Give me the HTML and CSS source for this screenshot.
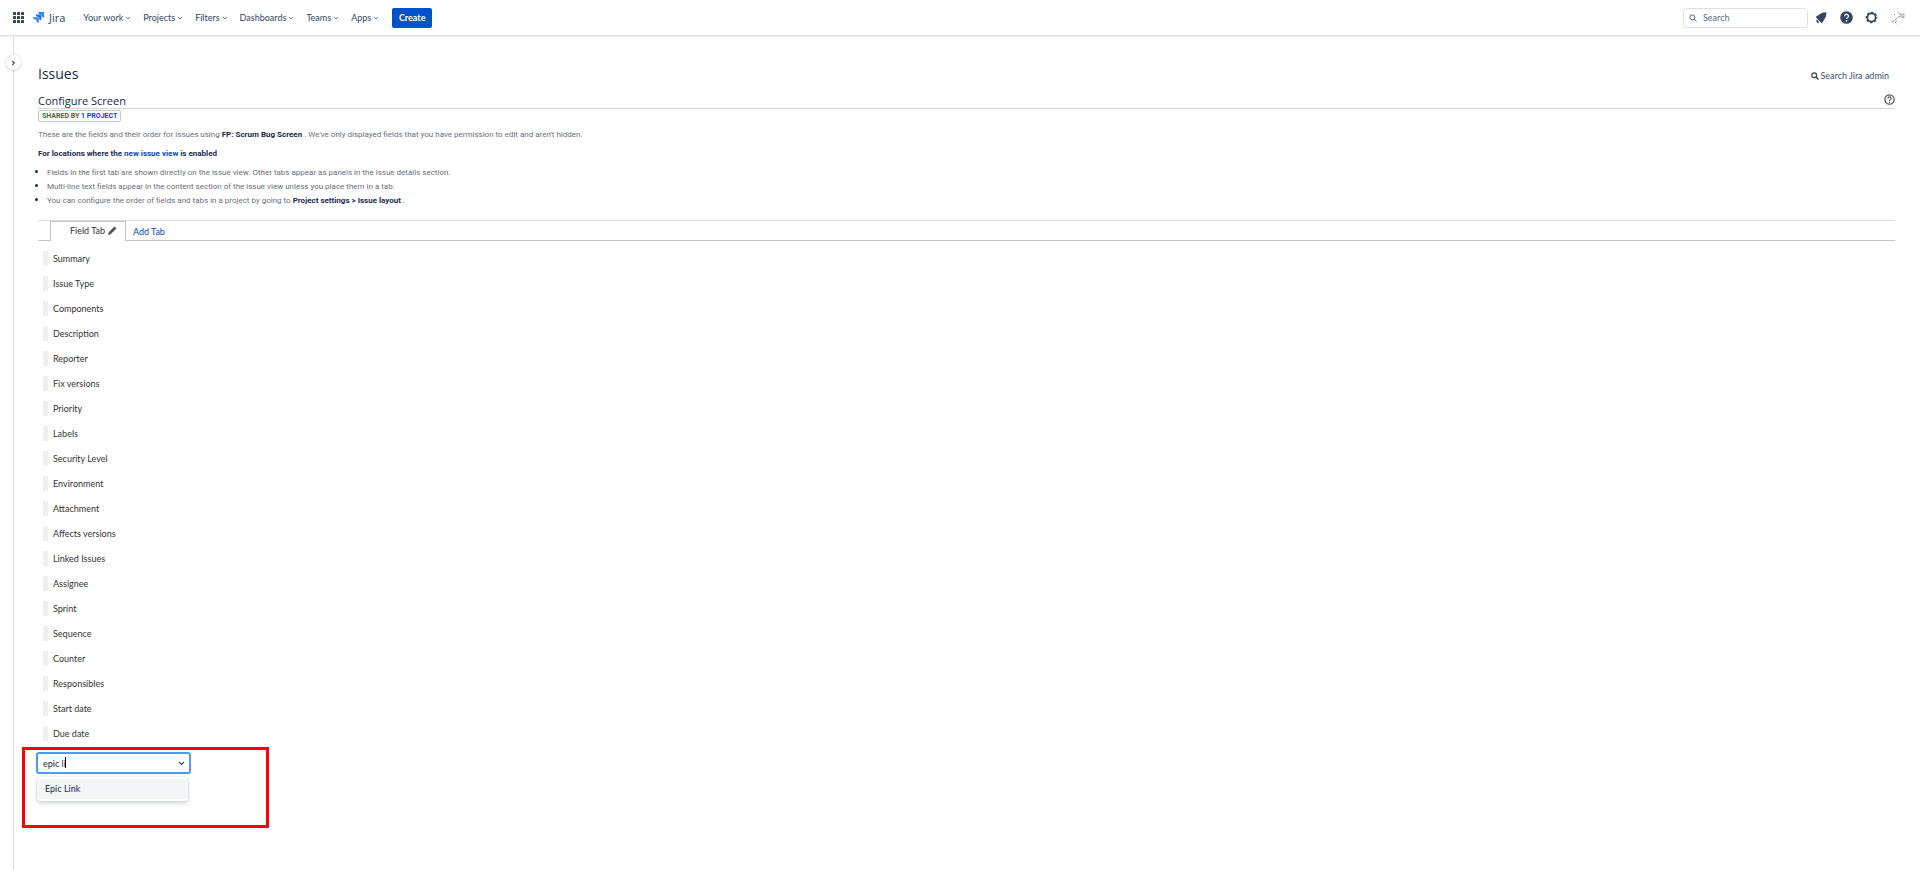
FILE: index.html
```html
<!DOCTYPE html>
<html lang="en">
<head>
    <meta charset="UTF-8">
    <meta name="viewport" content="width=device-width, initial-scale=1.0">
    <title>Configure Screen - Jira</title>
    <link rel="stylesheet" href="styles.css">
</head>
<body>

    <header class="topbar">
        <button class="icon-btn switcher" aria-label="App switcher">
            <svg width="12" height="12" viewBox="0 0 12 12" fill="#344563">
                <rect x="0" y="0" width="3" height="3" rx=".6"/><rect x="4" y="0" width="3" height="3" rx=".6"/><rect x="8" y="0" width="3" height="3" rx=".6"/>
                <rect x="0" y="4" width="3" height="3" rx=".6"/><rect x="4" y="4" width="3" height="3" rx=".6"/><rect x="8" y="4" width="3" height="3" rx=".6"/>
                <rect x="0" y="8" width="3" height="3" rx=".6"/><rect x="4" y="8" width="3" height="3" rx=".6"/><rect x="8" y="8" width="3" height="3" rx=".6"/>
            </svg>
        </button>
        <a class="logo" href="#">
            <svg width="11" height="11" viewBox="0 0 24 24">
                <path fill="#2684ff" d="M23 0H11.500a5.200 5.200 0 0 0 5.200 5.200h2.100v2A5.200 5.200 0 0 0 24 12.400V1a1 1 0 0 0-1-1z"/>
                <path fill="#1a6fee" d="M17.300 5.700H5.800A5.200 5.200 0 0 0 11 10.900h2.100v2a5.200 5.200 0 0 0 5.200 5.200V6.700a1 1 0 0 0-1-1z"/>
                <path fill="#2684ff" d="M11.600 11.400H0a5.200 5.200 0 0 0 5.200 5.200h2.100v2a5.200 5.200 0 0 0 5.300 5V12.400a1 1 0 0 0-1-1z"/>
            </svg>
            <span>Jira</span>
        </a>
        <nav class="menu">
            <button>Your work <svg width="6" height="4" viewBox="0 0 6 4"><path d="M1 1l2 2 2-2"/></svg></button>
            <button>Projects <svg width="6" height="4" viewBox="0 0 6 4"><path d="M1 1l2 2 2-2"/></svg></button>
            <button>Filters <svg width="6" height="4" viewBox="0 0 6 4"><path d="M1 1l2 2 2-2"/></svg></button>
            <button>Dashboards <svg width="6" height="4" viewBox="0 0 6 4"><path d="M1 1l2 2 2-2"/></svg></button>
            <button>Teams <svg width="6" height="4" viewBox="0 0 6 4"><path d="M1 1l2 2 2-2"/></svg></button>
            <button>Apps <svg width="6" height="4" viewBox="0 0 6 4"><path d="M1 1l2 2 2-2"/></svg></button>
        </nav>
        <button class="create">Create</button>

        <div class="tools">
            <label class="search">
                <svg width="8" height="8" viewBox="0 0 9 9" fill="none" stroke="#42526e"><circle cx="3.800" cy="3.800" r="2.800"/><path d="M6 6l2.500 2.500"/></svg>
                <input type="text" placeholder="Search" aria-label="Search">
            </label>
            <button class="icon-btn" aria-label="Notifications">
                <svg width="13" height="13" viewBox="0 0 13 13" fill="#344563"><path d="M11.500 1.200L7 1.800 1.300 5.600a.8.800 0 0 0 0 1.200l4.900 4.900a.8.800 0 0 0 1.200-.2L10.800 6z"/><path d="M1.800 8.600l2.600 2.600a1.800 1.800 0 0 1-2.600-2.600z"/></svg>
            </button>
            <button class="icon-btn" aria-label="Help">
                <svg width="13" height="13" viewBox="0 0 13 13"><circle cx="6.500" cy="6.500" r="6.300" fill="#344563"/><path d="M4.600 5.200a1.900 1.900 0 1 1 2.900 1.600c-.7.400-1 .7-1 1.300" fill="none" stroke="#fff" stroke-width="1.300"/><circle cx="6.500" cy="9.900" r=".8" fill="#fff"/></svg>
            </button>
            <button class="icon-btn" aria-label="Settings">
                <svg width="13" height="13" viewBox="0 0 13 13" fill="none" stroke="#344563"><circle cx="6.500" cy="6.500" r="4.100" stroke-width="1.700"/><circle cx="6.500" cy="6.500" r="5.200" stroke-width="1.300" stroke-dasharray="2.400 1.684" stroke-dashoffset="1.200"/></svg>
            </button>
            <button class="icon-btn" aria-label="Your profile">
                <svg width="16" height="15" viewBox="0 0 16 15" fill="none" stroke="#777" stroke-width=".8"><path d="M2 12l3-2 2-2 3-2M9 4h5v3l-3 1M10 6h3M5 13l2-3M4 4l1 1M8 3h1" stroke-dasharray="3 .6"/><circle cx="7.500" cy="7.500" r="6.600" stroke="#bbb" stroke-dasharray="1 2.400"/></svg>
            </button>
        </div>
    </header>

    <div class="page">
        <aside class="sidebar">
            <button class="expand" aria-label="Expand sidebar">
                <svg width="5" height="6" viewBox="0 0 5 6" fill="none" stroke="#42526e" stroke-width="1.200"><path d="M1.300 1l2 2-2 2"/></svg>
            </button>
        </aside>

        <main class="content">
            <div class="title-row">
                <h1>Issues</h1>
                <a class="admin-search" href="#">
                    <svg width="8" height="8" viewBox="0 0 8 8" fill="none" stroke="#344563"><circle cx="3.200" cy="3.200" r="2.400" stroke-width="1.200"/><path d="M5 5l2.500 2.500" stroke-width="1.500"/></svg>
                    Search Jira admin
                </a>
            </div>

            <div class="screen-row">
                <h2>Configure Screen</h2>
                <a class="help" href="#" aria-label="Get help">
                    <svg width="11" height="11" viewBox="0 0 11 11" fill="none" stroke="#555"><circle cx="5.500" cy="5.500" r="4.700" stroke-width="1.200"/><path d="M3.900 4.500a1.600 1.600 0 1 1 2.400 1.300c-.6.300-.8.600-.8 1.100M5.500 7.600v1.100" stroke-width="1.100"/></svg>
                </a>
            </div>
            <div class="shared">SHARED BY <a href="#">1 PROJECT</a></div>

            <div class="description">
                <p>These are the fields and their order for issues using <strong>FP: Scrum Bug Screen</strong> . We've only displayed fields that you have permission to edit and aren't hidden.</p>
                <p><strong>For locations where the <a href="#">new issue view</a> is enabled</strong></p>
                <ul>
                    <li>Fields in the first tab are shown directly on the issue view. Other tabs appear as panels in the issue details section.</li>
                    <li>Multi-line text fields appear in the content section of the issue view unless you place them in a tab.</li>
                    <li>You can configure the order of fields and tabs in a project by going to <strong>Project settings &gt; Issue layout</strong> .</li>
                </ul>
            </div>

            <div class="tabs">
                <div class="tab">
                    Field Tab
                    <button class="icon-btn" aria-label="Rename tab">
                        <svg width="9" height="9" viewBox="0 0 9 9"><path d="M2.200 6.800L7.400 1.600" stroke="#555" stroke-width="2.800"/><path d="M0 9l.9-3.500 2.600 2.600z" fill="#555"/></svg>
                    </button>
                </div>
                <a class="add-tab" href="#">Add Tab</a>
            </div>

            <ul class="fields">
                <li>Summary</li>
                <li>Issue Type</li>
                <li>Components</li>
                <li>Description</li>
                <li>Reporter</li>
                <li>Fix versions</li>
                <li>Priority</li>
                <li>Labels</li>
                <li>Security Level</li>
                <li>Environment</li>
                <li>Attachment</li>
                <li>Affects versions</li>
                <li>Linked Issues</li>
                <li>Assignee</li>
                <li>Sprint</li>
                <li>Sequence</li>
                <li>Counter</li>
                <li>Responsibles</li>
                <li>Start date</li>
                <li>Due date</li>
            </ul>

            <div class="highlight">
                <div class="picker">
                    <input type="text" value="epic li" role="combobox" aria-expanded="true" aria-controls="options" aria-label="Select field">
                    <span class="caret"></span>
                    <svg class="arrow" width="7" height="5" viewBox="0 0 7 5" fill="none" stroke="#344563" stroke-width="1.200"><path d="M1 1l2.500 2.500L6 1"/></svg>
                </div>
                <ul class="options" id="options" role="listbox">
                    <li role="option" aria-selected="true">Epic Link</li>
                </ul>
            </div>
        </main>
    </div>

</body>
</html>
```
FILE: styles.css
```css
* {
    box-sizing: border-box;
}

body {
    margin: 0;
    min-height: 100vh;
    display: flex;
    flex-direction: column;
    background-color: #fff;
    color: #172b4d;
    font-family: Lato, "Open Sans", sans-serif;
    font-size: 9px;
    line-height: 14px;
}

h1, h2, p, ul {
    margin: 0;
    padding: 0;
    font-weight: normal;
}

h1, h2 {
    font-family: "Open Sans", sans-serif;
}

ul {
    list-style: none;
}

a {
    color: #0747c6;
    text-decoration: none;
}

button, input {
    font: inherit;
    color: inherit;
    border: none;
    background: none;
    padding: 0;
}

button {
    cursor: pointer;
}

svg {
    display: block;
    flex: none;
}

/* Top navigation */
.topbar {
    display: flex;
    align-items: center;
    height: 36px;
    padding: 0 14px 0 13px;
    border-bottom: 1px solid #dfe1e8;
    box-shadow: 0 1px 0 #eeeff3;
}

.icon-btn {
    display: flex;
    align-items: center;
    justify-content: center;
}

.logo {
    display: flex;
    align-items: center;
    gap: 5px;
    margin-left: 8px;
    color: #344563;
    font-family: "Open Sans", sans-serif;
    font-size: 11px;
}

.menu {
    display: flex;
    gap: 12px;
    margin: 0 13px 0 18px;
    color: #344563;
}

.menu button {
    display: flex;
    align-items: center;
    gap: 2px;
}

.menu path {
    fill: none;
    stroke: #7a869a;
}

.create {
    width: 40px;
    height: 20px;
    border-radius: 2px;
    background-color: #0052cc;
    color: #fff;
    font-weight: bold;
}

.tools {
    display: flex;
    align-items: center;
    gap: 12px;
    margin-left: auto;
}

.search {
    display: flex;
    align-items: center;
    gap: 6px;
    width: 125px;
    height: 20px;
    padding: 0 5px;
    border: 1px solid #dfe1e6;
    border-radius: 3px;
    margin-right: -5px;
}

.search input {
    flex: 1;
    min-width: 0;
    outline: none;
}

.search input::placeholder {
    color: #5e6c84;
    opacity: 1;
}

/* Page body */
.page {
    flex: 1;
    display: flex;
}

.sidebar {
    position: relative;
    width: 14px;
    border-right: 1px solid #dfe0e4;
}

.expand {
    position: absolute;
    top: 19px;
    right: -8px;
    display: flex;
    align-items: center;
    justify-content: center;
    width: 15px;
    height: 15px;
    border-radius: 50%;
    background-color: #fff;
    box-shadow: 0 0 0 1px rgba(9, 30, 66, 0.06), 0 1px 3px rgba(9, 30, 66, 0.15);
}

.content {
    flex: 1;
    min-width: 0;
    padding: 26px 25px 24px 24px;
}

.title-row {
    display: flex;
    align-items: center;
    justify-content: space-between;
    padding-right: 6px;
}

.title-row h1 {
    font-size: 14px;
    line-height: 24px;
}

.admin-search {
    display: flex;
    align-items: center;
    gap: 2px;
    padding-top: 3px;
    color: #42526e;
}

.screen-row {
    display: flex;
    align-items: center;
    justify-content: space-between;
    margin-top: 8px;
    border-bottom: 1px solid #d5d6d9;
}

.screen-row h2 {
    font-size: 11px;
    line-height: 14px;
}

.help {
    padding-bottom: 3px;
}

.shared {
    width: max-content;
    margin-top: 1px;
    padding: 0 3px;
    border: 1px solid #b2d8b9;
    border-radius: 2px;
    color: #1f7a2c;
    font-family: Roboto, sans-serif;
    font-size: 7px;
    font-weight: bold;
    line-height: 10px;
}

.description {
    padding-top: 6px;
    color: #6b6f78;
    font-family: Roboto, sans-serif;
    font-size: 8px;
}

.description p {
    margin-bottom: 5px;
}

.description strong {
    color: #172b4d;
}

.description li {
    position: relative;
    padding-left: 9px;
}

.description li::before {
    content: "";
    position: absolute;
    left: -3px;
    top: 4px;
    width: 3px;
    height: 3px;
    border-radius: 50%;
    background-color: #172b4d;
}

/* Tabs */
.tabs {
    display: flex;
    height: 21px;
    margin-top: 12px;
    border-top: 1px solid #dcdcdc;
    border-bottom: 1px solid #c4c4c4;
}

.tab {
    display: flex;
    align-items: center;
    gap: 3px;
    height: 20px;
    margin-left: 12px;
    padding: 0 8px 2px 19px;
    border: 1px solid #c4c4c4;
    border-bottom: none;
    background-color: #fff;
    color: #333;
}

.add-tab {
    padding: 4px 7px;
}

/* Field list */
.fields {
    padding: 5px 0 0 5px;
    color: #333;
}

.fields li {
    display: flex;
    align-items: center;
    gap: 5px;
    height: 25px;
}

.fields li::before {
    content: "";
    width: 5px;
    height: 15px;
    background-color: #efefed;
}

/* Field picker */
.highlight {
    width: 247px;
    height: 81px;
    margin: 1px 0 0 -16px;
    padding: 2px 11px;
    border: 3px solid #fe0000;
}

.picker {
    position: relative;
    width: 155px;
}

.picker input {
    display: block;
    width: 100%;
    height: 22px;
    padding: 0 5px;
    border: 2px solid #4c9aff;
    border-radius: 3px;
    outline: none;
}

.caret {
    position: absolute;
    left: 29px;
    top: 5px;
    width: 1px;
    height: 11px;
    background-color: #000;
}

.arrow {
    position: absolute;
    right: 6px;
    top: 9px;
}

.options {
    width: 151px;
    margin: 3px 0 0 1px;
    padding: 2px 0;
    border-radius: 3px;
    box-shadow: 0 2px 4px rgba(9, 30, 66, 0.2), 0 0 1px rgba(9, 30, 66, 0.25);
}

.options li {
    padding: 3px 8px;
    background-color: #f4f5f7;
}
```
